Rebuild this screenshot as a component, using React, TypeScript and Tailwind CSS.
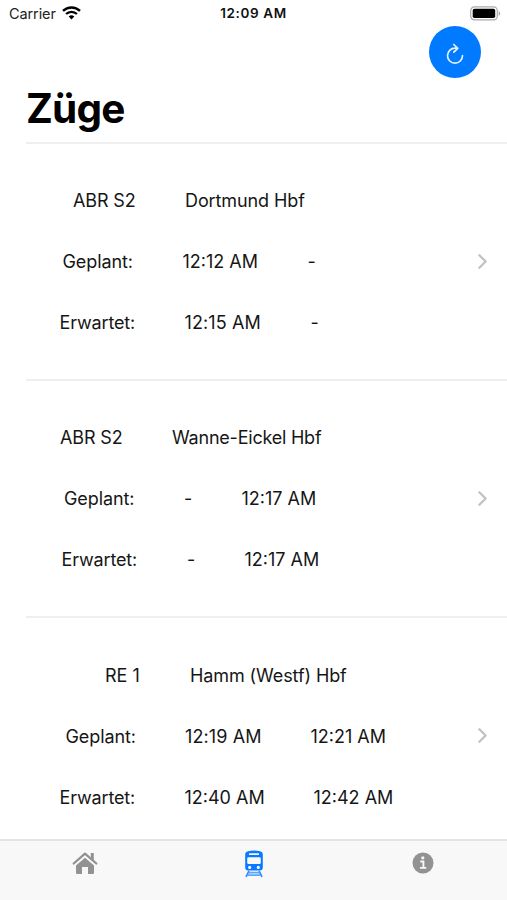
import { ChevronRight } from "lucide-react";

type Cell = { text: string; box: string };
type Train = { id: string; lines: Cell[][] };

const trains: Train[] = [
  {
    id: "dortmund",
    lines: [
      [{ text: "ABR S2", box: "ml-[73px] w-[112px] tracking-[-0.15px]" }, { text: "Dortmund Hbf", box: "tracking-[-0.1px]" }],
      [{ text: "Geplant:", box: "ml-[62.5px] w-[120px] tracking-[-0.1px]" }, { text: "12:12 AM", box: "w-[125px]" }, { text: "-", box: "" }],
      [{ text: "Erwartet:", box: "ml-[59.5px] w-[125px] tracking-[-0.15px]" }, { text: "12:15 AM", box: "w-[126px] tracking-[0.1px]" }, { text: "-", box: "" }],
    ],
  },
  {
    id: "wanne",
    lines: [
      [{ text: "ABR S2", box: "ml-[60px] w-[112px] tracking-[-0.15px]" }, { text: "Wanne-Eickel Hbf", box: "tracking-[-0.22px]" }],
      [{ text: "Geplant:", box: "ml-[64px] w-[120px] tracking-[-0.1px]" }, { text: "-", box: "w-[57.5px]" }, { text: "12:17 AM", box: "" }],
      [{ text: "Erwartet:", box: "ml-[61.5px] w-[125.5px] tracking-[-0.15px]" }, { text: "-", box: "w-[57.5px]" }, { text: "12:17 AM", box: "" }],
    ],
  },
  {
    id: "hamm",
    lines: [
      [{ text: "RE 1", box: "ml-[105px] w-[85px]" }, { text: "Hamm (Westf) Hbf", box: "tracking-[-0.1px]" }],
      [{ text: "Geplant:", box: "ml-[65.5px] w-[119.5px] tracking-[-0.1px]" }, { text: "12:19 AM", box: "w-[125.5px] tracking-[0.1px]" }, { text: "12:21 AM", box: "" }],
      [{ text: "Erwartet:", box: "ml-[59.5px] w-[125px] tracking-[-0.15px]" }, { text: "12:40 AM", box: "w-[129px]" }, { text: "12:42 AM", box: "" }],
    ],
  },
];

function StatusBar() {
  return (
    <header className="grid h-[26px] shrink-0 grid-cols-3 items-center pt-px">
      <div className="flex items-center gap-[6px] pl-[9px] text-[14.5px] tracking-[-0.1px] text-[#222]">
        <span>Carrier</span>
        <svg className="-mt-[2px]" width="19" height="14" viewBox="0 0 19 14" fill="none" stroke="#000" strokeWidth="2.4">
          <path d="M1 4.9a12.2 12.2 0 0 1 17 0" />
          <path d="M4.1 8a7.8 7.8 0 0 1 10.8 0" />
          <path d="M6.7 10.5a4.1 4.1 0 0 1 5.6 0L9.5 13.4Z" fill="#000" stroke="none" />
        </svg>
      </div>
      <span className="text-center text-[13.5px] font-semibold tracking-[0.6px] text-[#111]">12:09 AM</span>
      <svg className="mr-[6px] justify-self-end" width="31" height="15" viewBox="0 0 31 15">
        <rect x="0.7" y="0.9" width="26.6" height="13" rx="3.8" fill="#fff" stroke="#aaa" strokeWidth="1.2" />
        <rect x="2.7" y="2.8" width="22.5" height="9.2" rx="1.8" fill="#000" />
        <path d="M28.7 5v5q1.5-.8 1.5-2.5T28.7 5" fill="#aaa" />
      </svg>
    </header>
  );
}

function TrainRow({ train }: { train: Train }) {
  return (
    <div className="flex h-[235.3px] items-center">
      <div className="grow pt-[0.6px]">
        {train.lines.map((line, i) => (
          <div key={i} className="flex h-[61.1px] items-center whitespace-nowrap">
            {line.map((cell, j) => (
              <span key={j} className={cell.box}>{cell.text}</span>
            ))}
          </div>
        ))}
      </div>
      <ChevronRight className="mr-[12px] text-[#c1c1c4]" size={25} strokeWidth={2.2} />
    </div>
  );
}

function HomeIcon() {
  return (
    <svg width="26" height="24" viewBox="0 0 26 24" fill="#929292">
      <path d="M13 6.800 22 14.400v7.400q0 1.200-1.200 1.200H16v-7h-6v7H5.200Q4 23 4 21.800v-7.400Z" />
      <path d="M1.700 12.500 13 2.700l11.300 9.800" fill="none" stroke="#929292" strokeWidth="2.300" strokeLinecap="round" strokeLinejoin="round" />
      <path d="M18.800 2h3v7.500l-3-2.600Z" />
    </svg>
  );
}

function TrainIcon() {
  return (
    <svg width="20" height="28" viewBox="0 0 20 28">
      <path d="M5 21 2 26.800M15 21l3 5.800" stroke="#2b8bff" strokeWidth="1.700" />
      <path d="M4.500 22.700h11M3.500 25.200h13" stroke="#5ba6ff" strokeWidth="1.700" />
      <path fillRule="evenodd" fill="#087aff" d="M4 1.200Q10-.3 16 1.200 18.800 1.700 18.800 4v13.500q0 3-3 3H4.200q-3 0-3-3V4Q1.200 1.700 4 1.200M5 3.200v1.700h10V3.200ZM4.500 7.300q-1.300 0-1.300 1.200v4.200q0 1.200 1.300 1.200h11q1.300 0 1.300-1.200V8.500q0-1.200-1.300-1.200ZM5.700 15.800a1.600 1.600 0 1 0 0 3.200 1.600 1.600 0 0 0 0-3.200m8.600 0a1.600 1.600 0 1 0 0 3.200 1.600 1.600 0 0 0 0-3.200" />
    </svg>
  );
}

function InfoIcon() {
  return (
    <svg width="22" height="22" viewBox="0 0 22 22">
      <circle cx="11" cy="11" r="10.500" fill="#929292" />
      <circle cx="10.800" cy="5.800" r="1.600" fill="#f8f8f8" />
      <path d="M8.300 9.500h3.100v6.300M8 15.900h6.300" fill="none" stroke="#f8f8f8" strokeWidth="1.900" />
    </svg>
  );
}

export default function App() {
  return (
    <div className="flex h-[900px] w-[507px] flex-col overflow-hidden bg-white font-['Inter','Liberation_Sans',sans-serif] text-black">
      <StatusBar />
      <div className="flex shrink-0 justify-end pr-[26px]">
        <button aria-label="Aktualisieren" className="flex size-[52px] items-center justify-center rounded-full bg-[#007aff] pt-[3px]">
          <svg width="20" height="24" viewBox="0 0 20 24" fill="none" stroke="#e4f1ff" strokeWidth="1.700" strokeLinecap="round" strokeLinejoin="round">
            <path d="M10 6.200A7.500 7.500 0 1 0 17.500 13.700M8.800 2.500l4 3.800-4 3.900M12.500 6.300Q11.500 6.100 10 6.200" />
          </svg>
        </button>
      </div>
      <h1 className="flex h-[63.6px] shrink-0 items-center pl-[26px] text-[40.5px] font-bold tracking-[-0.8px]">Züge</h1>
      <ul className="flex min-h-0 grow flex-col overflow-hidden text-[18px] text-[#161616]">
        {trains.map((train) => (
          <li key={train.id} className="shrink-0">
            <div className="ml-[26px] h-[2px] bg-[#efeff0]" />
            <TrainRow train={train} />
          </li>
        ))}
      </ul>
      <nav className="grid h-[61px] shrink-0 grid-cols-3 justify-items-center border-t-2 border-[#e4e4e4] bg-[#f8f8f8]">
        <a className="pt-[10px]"><HomeIcon /></a>
        <a className="pt-[9px]"><TrainIcon /></a>
        <a className="pt-[11px]"><InfoIcon /></a>
      </nav>
    </div>
  );
}
